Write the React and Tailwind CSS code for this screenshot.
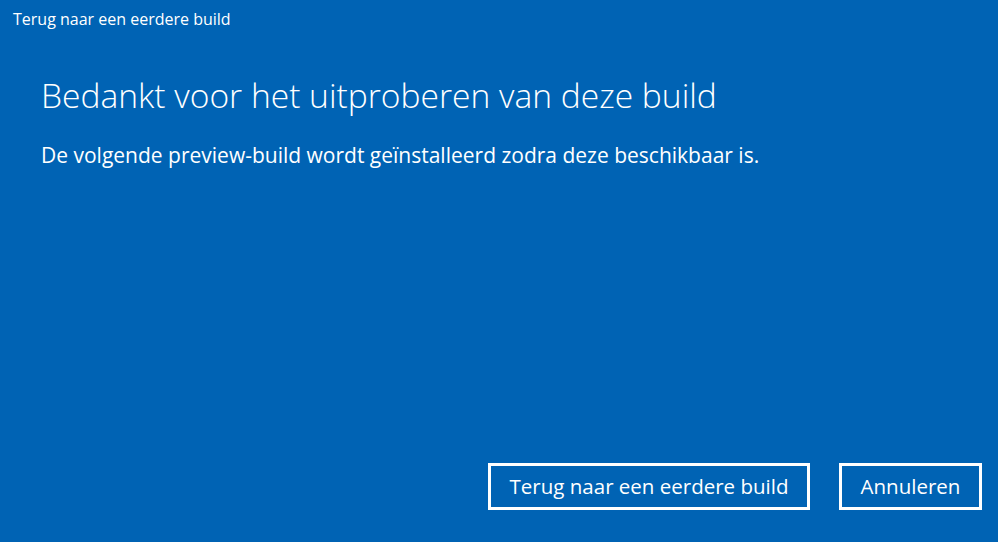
import React from 'react'

const font = { fontFamily: '"Open Sans", "Noto Sans", sans-serif' }

export default function App() {
  return (
    <div className="w-full h-[542px] bg-[#0063b4] text-white flex flex-col" style={font}>
      <div className="pl-[13px] pt-[8px] text-[16px] leading-[22px]">Terug naar een eerdere build</div>

      <div className="px-[41px] pt-[43px]">
        <h1 className="text-[33.6px] font-light leading-[44px]">Bedankt voor het uitproberen van deze build</h1>
        <p className="mt-[24px] text-[21px] leading-[28px]">
          De volgende preview-build wordt geïnstalleerd zodra deze beschikbaar is.
        </p>
      </div>

      <div className="mt-auto flex justify-end gap-[29px] pr-[16px] pb-[32px]">
        <button className="w-[322px] h-[47px] border-[3px] border-white text-[20.5px]">
          Terug naar een eerdere build
        </button>
        <button className="w-[143px] h-[47px] border-[3px] border-white text-[20.5px]">
          Annuleren
        </button>
      </div>
    </div>
  )
}
